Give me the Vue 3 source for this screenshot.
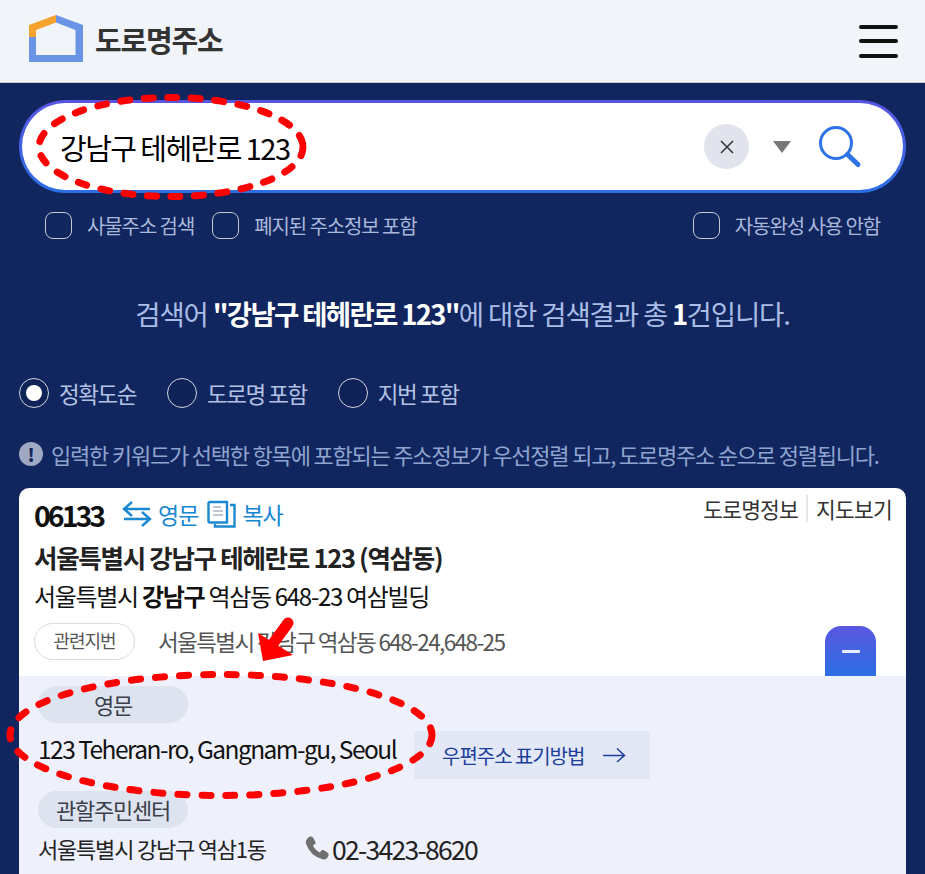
<script setup>
const checks = ['사물주소 검색', '폐지된 주소정보 포함']
const radios = [
  { label: '정확도순', on: true },
  { label: '도로명 포함', on: false },
  { label: '지번 포함', on: false }
]
</script>

<template>
  <div class="page">
    <header class="header">
      <div class="brand">
        <svg class="logo" width="56" height="48" viewBox="0 0 56 48">
          <path d="M1 47 V22 H8 V40 H47.500 V22 H55 V47 Z" fill="#6a95e6" />
          <path d="M28 0 L55 10 V22 H47.500 V15 L28 7.500 Z" fill="#6a95e6" />
          <path d="M28 0 L1 10 V22 H8 V15 L28 7.500 Z" fill="#f5a22f" />
        </svg>
        <span class="brand-name">도로명주소</span>
      </div>
      <div class="burger"><i></i><i></i><i></i></div>
    </header>

    <main class="main">
      <div class="search">
        <div class="search-inner">
          <span class="query">강남구 테헤란로 123</span>
          <span class="clear">
            <svg width="14" height="14" viewBox="0 0 14 14"><path d="M1 1 L13 13 M13 1 L1 13" stroke="#333" stroke-width="1.500" /></svg>
          </span>
          <span class="caret"></span>
          <svg class="magnifier" width="44" height="44" viewBox="0 0 44 44">
            <circle cx="18" cy="18" r="15.500" fill="none" stroke="#2d72e6" stroke-width="3" />
            <path d="M29.500 29.500 L40 39.500" stroke="#2d72e6" stroke-width="5" stroke-linecap="round" />
          </svg>
        </div>
      </div>

      <div class="options">
        <label v-for="c in checks" :key="c" class="check"><span class="box"></span>{{ c }}</label>
        <label class="check auto"><span class="box"></span>자동완성 사용 안함</label>
      </div>

      <p class="summary">검색어 <b>"강남구 테헤란로 123"</b>에 대한 검색결과 총 <b>1</b>건입니다.</p>

      <div class="radios">
        <label v-for="r in radios" :key="r.label" class="radio">
          <span class="dot" :class="{ on: r.on }"></span>{{ r.label }}
        </label>
      </div>

      <p class="notice"><span class="bang">!</span>입력한 키워드가 선택한 항목에 포함되는 주소정보가 우선정렬 되고, 도로명주소 순으로 정렬됩니다.</p>

      <section class="card">
        <div class="card-top">
          <div class="topline">
            <strong class="zip">06133</strong>
            <svg class="swap" width="30" height="28" viewBox="0 0 30 28">
              <path d="M10 2 L2 9 L10 16 M2 9 H28 M20 12 L28 19 L20 26 M28 19 H2" fill="none" stroke="#1b88d2" stroke-width="2.400" />
            </svg>
            <span class="link">영문</span>
            <svg class="copy" width="29" height="28" viewBox="0 0 29 28">
              <path d="M20 2 H3 Q1.500 2 1.500 3.500 V21 Q1.500 22.500 3 22.500 H20 Z" fill="none" stroke="#1b88d2" stroke-width="2.400" />
              <path d="M23 5 H27.500 V26.500 H8 V24" fill="none" stroke="#1b88d2" stroke-width="2.400" />
              <path d="M6 7 H14 M6 11 H16 M6 15 H16" stroke="#a9b3c4" stroke-width="1.300" />
            </svg>
            <span class="link">복사</span>
            <span class="tools"><span class="tool first">도로명정보</span><span class="tool">지도보기</span></span>
          </div>
          <h2 class="road">서울특별시 강남구 테헤란로 123 (역삼동)</h2>
          <p class="jibun">서울특별시 <b>강남구</b> 역삼동 648-23 여삼빌딩</p>
          <div class="related">
            <span class="pill">관련지번</span>
            <span class="related-text">서울특별시 강남구 역삼동 648-24,648-25</span>
            <span class="toggle"><i></i></span>
          </div>
        </div>

        <div class="detail">
          <div class="tag">영문</div>
          <div class="en-row">
            <span class="en">123 Teheran-ro, Gangnam-gu, Seoul</span>
            <span class="howto">우편주소 표기방법
              <svg width="24" height="16" viewBox="0 0 24 16"><path d="M1 8.500 H22 M15 1.500 L22.500 8.500 L15 15" fill="none" stroke="#1c3f9c" stroke-width="1.500" /></svg>
            </span>
          </div>
          <div class="tag">관할주민센터</div>
          <div class="center-row">
            <span>서울특별시 강남구 역삼1동</span>
            <span class="phone">
              <svg width="24" height="24" viewBox="0 0 24 24"><path d="M5 0.500 Q7 0 8 1.500 L10.500 6 Q11 7.500 9.500 8.500 L8 9.500 Q10 14 15 16.500 L16 15 Q17 13.500 18.500 14 L23 17 Q24 18 23.500 19.500 Q22 24 18 23.500 Q5 20 0.800 7 Q0.500 3 5 0.500 Z" fill="#707070" /></svg>
              02-3423-8620
            </span>
          </div>
        </div>
      </section>
    </main>

    <svg class="marks" width="925" height="874" viewBox="0 0 925 874">
      <ellipse cx="171" cy="147" rx="132" ry="49.500" fill="none" stroke="#f00" stroke-width="7" stroke-linecap="round" stroke-dasharray="9 14.500" />
      <ellipse cx="221" cy="735" rx="211" ry="60.500" fill="none" stroke="#f00" stroke-width="7" stroke-linecap="round" stroke-dasharray="9 15" />
      <path d="M288 623 L272 645" stroke="#f00" stroke-width="11" stroke-linecap="round" />
      <path d="M263 661 L258 633 L293 655 Z" fill="#f00" />
    </svg>
  </div>
</template>

<style>
html, body { margin: 0; background: #11265f; }
</style>

<style scoped>
.page {
  position: relative;
  width: 925px;
  height: 874px;
  overflow: hidden;
  background: #11265f;
  font-family: "Noto Sans CJK KR", "Noto Sans", sans-serif;
  letter-spacing: -1px;
}
.header {
  box-sizing: border-box;
  height: 83px;
  padding: 0 27px 5px 28px;
  display: flex;
  align-items: center;
  justify-content: space-between;
  background: #f1f4f9;
  border-bottom: 1px solid #c9c9c9;
}
.brand { display: flex; align-items: center; gap: 11px; }
.logo { display: block; }
.brand-name { font-size: 29px; font-weight: 700; color: #333; letter-spacing: -1.200px; }
.burger { display: flex; flex-direction: column; gap: 10.500px; margin-top: 5px; }
.burger i { display: block; width: 39px; height: 4px; border-radius: 2px; background: #111; }
.main { padding: 17px 19px 0; }
.search {
  height: 93px;
  box-sizing: border-box;
  padding: 3px;
  border-radius: 47px;
  background: linear-gradient(180deg, #5a55e0, #2b6fe3);
}
.search-inner {
  height: 87px;
  display: flex;
  align-items: center;
  background: #fff;
  border-radius: 44px;
  padding: 0 41px 0 38px;
}
.query { flex: 1; font-size: 29px; color: #000; letter-spacing: -1.550px; margin-top: 1px; }
.clear {
  width: 45px;
  height: 45px;
  border-radius: 50%;
  background: #e1e4ec;
  display: flex;
  align-items: center;
  justify-content: center;
}
.caret {
  width: 0;
  height: 0;
  margin: 0 27px 0 24px;
  border-left: 9px solid transparent;
  border-right: 9px solid transparent;
  border-top: 12px solid #777;
}
.magnifier { display: block; }
.options {
  display: flex;
  align-items: center;
  height: 26px;
  margin-top: 19px;
  padding-left: 26px;
  gap: 18px;
  color: #a9b8da;
  font-size: 20px;
  letter-spacing: -1.100px;
}
.check { display: flex; align-items: center; gap: 15px; white-space: nowrap; }
.check.auto { margin-left: auto; margin-right: 26px; }
.box {
  width: 25px;
  height: 25px;
  border: 1px solid #c5c8d0;
  border-radius: 8px;
  flex: none;
}
.summary {
  margin: 0;
  padding-top: 55px;
  height: 56px;
  line-height: 40px;
  text-align: center;
  font-size: 27.500px;
  color: #a9bde6;
  letter-spacing: -1.150px;
}
.summary b { color: #fff; font-weight: 700; letter-spacing: -1.700px; }
.radios {
  display: flex;
  align-items: center;
  height: 30px;
  margin-top: 29px;
  gap: 31px;
  color: #b4c3e4;
  font-size: 22.500px;
  letter-spacing: -1.450px;
}
.radio { display: flex; align-items: center; gap: 10px; white-space: nowrap; }
.dot {
  box-sizing: border-box;
  width: 30px;
  height: 30px;
  border: 1px solid #d2d5dc;
  border-radius: 50%;
  background: #0f2358;
  display: flex;
  align-items: center;
  justify-content: center;
}
.dot.on::after {
  content: "";
  width: 16px;
  height: 16px;
  border-radius: 50%;
  background: #fff;
}
.notice {
  display: flex;
  align-items: center;
  gap: 8px;
  height: 24px;
  margin: 34px 0 0;
  color: #8fa4cf;
  font-size: 22px;
  white-space: nowrap;
  letter-spacing: -1.200px;
}
.bang {
  width: 24px;
  height: 24px;
  flex: none;
  border-radius: 50%;
  background: #a0a9c4;
  color: #11265f;
  font-weight: 900;
  font-size: 18px;
  line-height: 24px;
  text-align: center;
  letter-spacing: 0;
}
.card {
  margin-top: 22px;
  background: #fff;
  border-radius: 10px 10px 0 0;
  overflow: hidden;
}
.card-top { height: 188px; box-sizing: border-box; padding: 6px 14px 0 15px; position: relative; }
.topline { display: flex; align-items: center; height: 40px; }
.zip { font-size: 28.500px; font-weight: 700; color: #111; letter-spacing: -3px; margin-right: 19px; }
.swap { margin-right: 6px; }
.link { font-size: 23px; color: #1587d0; letter-spacing: -1px; margin-right: 9px; }
.copy { margin-right: 6px; }
.tools { margin-left: auto; display: flex; align-items: center; margin-top: -11px; font-size: 21.500px; color: #333; }
.tool { line-height: 27px; letter-spacing: -0.800px; }
.tool.first { border-right: 2px solid #e6e6e6; padding-right: 8px; margin-right: 8px; }
.road { margin: 5px 0 0; font-size: 25.500px; line-height: 36px; font-weight: 700; color: #222; letter-spacing: -1.300px; }
.jibun { margin: 3px 0 0; font-size: 24px; line-height: 36px; color: #111; letter-spacing: -1.300px; }
.jibun b { font-weight: 700; }
.related { display: flex; align-items: center; margin-top: 9px; color: #555; position: relative; height: 36px; }
.pill {
  box-sizing: border-box;
  width: 101px;
  height: 37px;
  border: 1px solid #dcdcdc;
  border-radius: 19px;
  font-size: 18px;
  line-height: 33px;
  text-align: center;
  color: #555;
  margin-right: 23px;
  flex: none;
}
.related-text { font-size: 22.500px; letter-spacing: -1.600px; }
.toggle {
  position: absolute;
  right: 16px;
  top: 3px;
  width: 51px;
  height: 50px;
  border-radius: 16px 16px 0 0;
  background: linear-gradient(180deg, #5a57e0, #2b6fe3);
  display: flex;
  align-items: center;
  justify-content: center;
}
.toggle i { width: 18px; height: 3px; background: #e8ecff; border-radius: 1px; }
.detail { background: #eef1fb; padding: 10px 19px 0 19px; height: 198px; box-sizing: border-box; color: #111; }
.tag {
  width: 150px;
  height: 37px;
  border-radius: 19px;
  background: #dee3f0;
  font-size: 22px;
  line-height: 37px;
  text-align: center;
  color: #3a3f4a;
  letter-spacing: -1.200px;
}
.en-row { display: flex; align-items: flex-start; height: 68px; }
.en { font-size: 24.500px; line-height: 36px; margin-top: 8px; color: #111; letter-spacing: -1.530px; margin-right: 18px; white-space: nowrap; }
.howto {
  display: flex;
  align-items: center;
  justify-content: space-between;
  box-sizing: border-box;
  width: 236px;
  height: 48px;
  margin-top: 8px;
  padding: 0 24px 0 28px;
  background: #e3e8f6;
  font-size: 20px;
  color: #1c3f9c;
  letter-spacing: -1.050px;
  white-space: nowrap;
}
.center-row { display: flex; align-items: center; height: 46px; margin-top: -3px; font-size: 22px; color: #222; letter-spacing: -1.200px; }
.phone { display: flex; align-items: center; gap: 3px; margin-left: 39px; font-size: 26.500px; letter-spacing: -1.700px; }
.marks { position: absolute; left: 0; top: 0; pointer-events: none; }
</style>
